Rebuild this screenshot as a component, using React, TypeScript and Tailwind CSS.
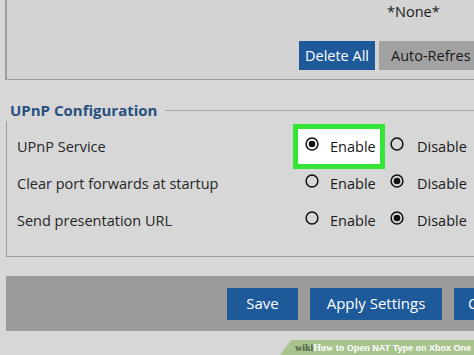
import React from "react";

function Radio({ checked }: { checked: boolean }) {
  return (
    <svg width="14" height="14" viewBox="0 0 14 14" className="shrink-0 mb-[5px]">
      <circle cx="7" cy="7" r="5.9" fill="none" stroke="#111" strokeWidth="1.5" />
      {checked && <circle cx="7" cy="7" r="3.3" fill="#111" />}
    </svg>
  );
}

function Row({ label, enable, highlight }: { label: string; enable: boolean; highlight?: boolean }) {
  return (
    <div className="flex items-center h-[37px]">
      <div className="w-[286px] pl-[10px] text-[14.5px] text-[#262626] whitespace-nowrap">{label}</div>
      <div
        className={
          highlight
            ? "flex items-center gap-[11px] w-[92px] h-[45px] border-[5px] border-[#35e535] bg-white pl-[7px] shrink-0"
            : "flex items-center gap-[11px] w-[92px] h-[45px] pl-[12px] shrink-0"
        }
      >
        <Radio checked={enable} />
        <span className="text-[14.5px] text-[#1a1a1a]">Enable</span>
      </div>
      <div className="flex items-center gap-[13px] pl-[5px] shrink-0">
        <Radio checked={!enable} />
        <span className="text-[14.5px] text-[#1a1a1a]">Disable</span>
      </div>
    </div>
  );
}

export default function App() {
  return (
    <div
      className="relative w-[474px] h-[355px] overflow-hidden bg-[#d7d7d7]"
      style={{ fontFamily: '"Open Sans", "Noto Sans", sans-serif' }}
    >
      {/* top box */}
      <div className="ml-[5px] h-[80px] border-l-2 border-b border-[#9c9c9c] bg-[#d3d3d3] flex flex-col">
        <div className="pl-[380px] pt-[1px] text-[14.5px] leading-[22px] text-[#1a1a1a]">*None*</div>
        <div className="flex gap-[4px] pl-[292px] mt-[18px]">
          <div className="w-[76px] h-[29px] bg-[#1e5a9a] text-white text-[14.5px] flex items-center justify-center shrink-0">
            Delete All
          </div>
          <div className="flex-1 min-w-0 h-[29px] bg-[#a2a2a2] text-[#1a1a1a] text-[14.5px] flex items-center pl-[12px] whitespace-nowrap overflow-hidden">
            Auto-Refres
          </div>
        </div>
      </div>

      {/* heading */}
      <div className="flex items-center mt-[19px] pl-[10px]">
        <span className="text-[15px] font-bold text-[#28507f] leading-[22px]">UPnP Configuration</span>
        <div className="flex-1 ml-[8px] mt-[1px] border-t border-[#a8a8a8]"></div>
      </div>

      {/* fieldset */}
      <div className="ml-[6px] h-[136px] border-l border-b border-[#9c9c9c] flex flex-col pt-[7px]">
        <Row label="UPnP Service" enable={true} highlight />
        <Row label="Clear port forwards at startup" enable={false} />
        <Row label="Send presentation URL" enable={false} />
      </div>

      {/* bottom bar */}
      <div className="ml-[6px] mt-[19px] h-[55px] bg-[#9b9b9b] flex items-center gap-[12px] pl-[221px]">
        <div className="w-[71px] h-[32px] bg-[#1e5a9a] text-white text-[15px] flex items-center justify-center shrink-0">
          Save
        </div>
        <div className="w-[132px] h-[32px] bg-[#1e5a9a] text-white text-[15px] flex items-center justify-center shrink-0">
          Apply Settings
        </div>
        <div className="flex-1 h-[32px] bg-[#1e5a9a] text-white text-[15px] pl-[14px] flex items-center overflow-hidden">
          C
        </div>
      </div>

      {/* wikiHow banner */}
      <div
        className="absolute right-0 bottom-0 w-[194px] h-[15px] bg-[#a9c38f] flex items-center justify-end pr-[3px]"
        style={{ clipPath: "polygon(11px 0, 100% 0, 100% 100%, 0 100%)" }}
      >
        <span
          className="text-[9px] font-bold text-white whitespace-nowrap"
          style={{ fontFamily: '"Liberation Sans", Arial, sans-serif' }}
        >
          <span className="text-[#4f5f44] text-[10px]" style={{ fontFamily: '"Liberation Serif", serif' }}>wiki</span>
          <span className="text-[10px]" style={{ fontFamily: '"Liberation Serif", serif' }}>How</span> to Open NAT Type on Xbox One
        </span>
      </div>
    </div>
  );
}
